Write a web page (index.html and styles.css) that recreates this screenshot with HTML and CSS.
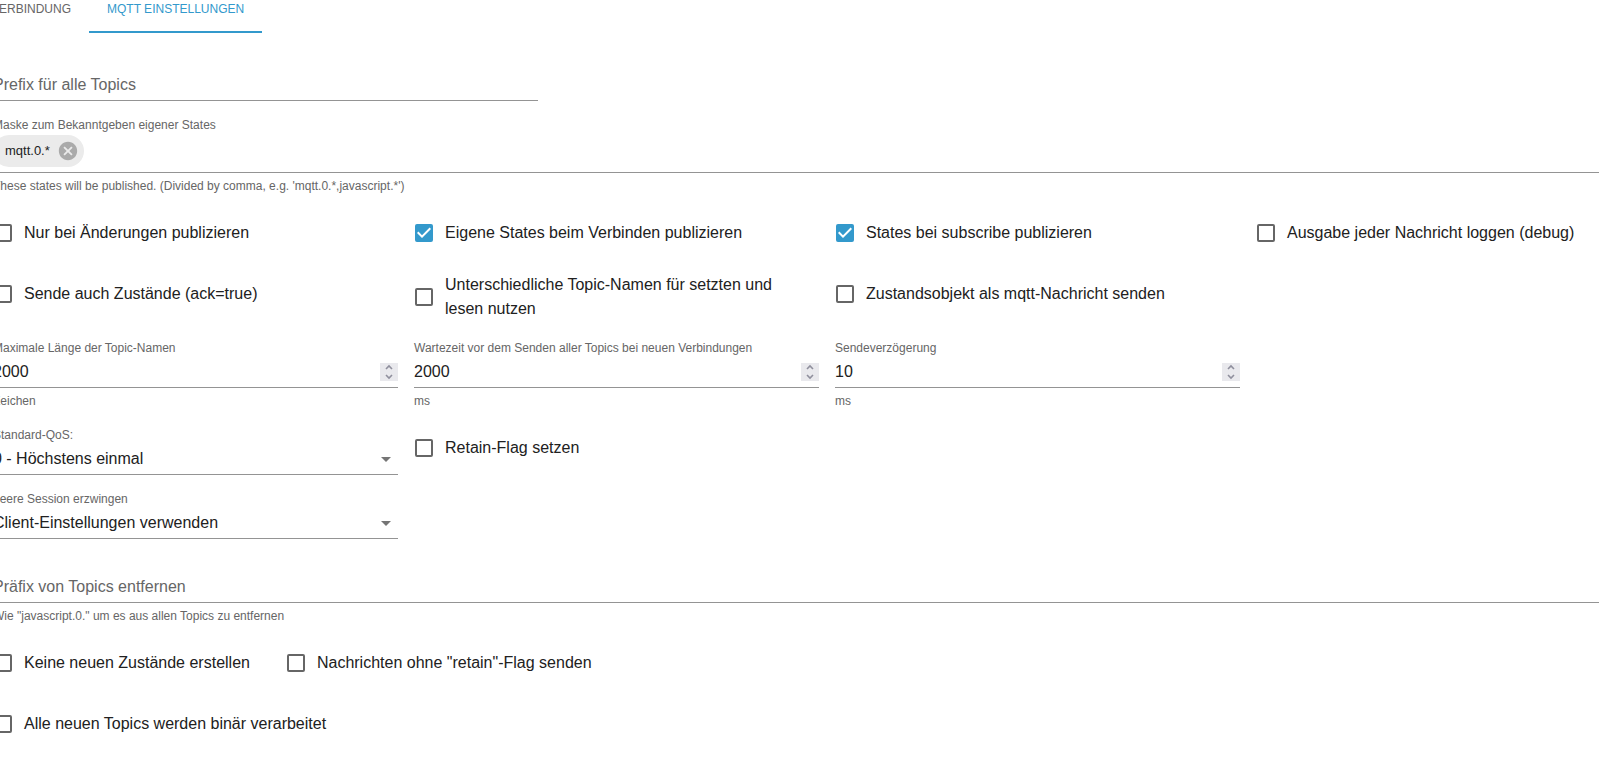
FILE: index.html
```html
<!DOCTYPE html>
<html lang="de">
<head>
<meta charset="utf-8">
<title>MQTT Einstellungen</title>
<link rel="stylesheet" href="styles.css">
</head>
<body>
<div class="panel">
  <nav class="tabs" role="tablist">
    <button class="tab" role="tab" type="button" aria-selected="false">Verbindung</button>
    <button class="tab tab-active" role="tab" type="button" aria-selected="true">MQTT Einstellungen</button>
  </nav>

  <form class="settings">
    <div class="row thirds">
      <div class="field field-empty">
        <label class="placeholder" for="prefix">Prefix für alle Topics</label>
        <input class="control" id="prefix" type="text">
      </div>
    </div>

    <div class="field">
      <label class="label" for="mask">Maske zum Bekanntgeben eigener States</label>
      <div class="chips">
        <span class="chip">mqtt.0.*
          <button class="chip-remove" type="button" aria-label="mqtt.0.* entfernen">
            <svg viewBox="0 0 24 24" width="22" height="22"><path d="M12 2C6.47 2 2 6.47 2 12s4.47 10 10 10 10-4.47 10-10S17.53 2 12 2zm5 13.59L15.59 17 12 13.41 8.41 17 7 15.59 10.59 12 7 8.41 8.41 7 12 10.59 15.59 7 17 8.41 13.41 12 17 15.59z"/></svg>
          </button>
        </span>
        <input class="chip-input" id="mask" type="text">
      </div>
      <p class="helper">These states will be published. (Divided by comma, e.g. 'mqtt.0.*,javascript.*')</p>
    </div>

    <div class="row quarters checks">
      <label class="check"><input type="checkbox"><span>Nur bei Änderungen publizieren</span></label>
      <label class="check"><input type="checkbox" checked><span>Eigene States beim Verbinden publizieren</span></label>
      <label class="check"><input type="checkbox" checked><span>States bei subscribe publizieren</span></label>
      <label class="check"><input type="checkbox"><span>Ausgabe jeder Nachricht loggen (debug)</span></label>
    </div>

    <div class="row quarters checks">
      <label class="check"><input type="checkbox"><span>Sende auch Zustände (ack=true)</span></label>
      <label class="check"><input type="checkbox"><span>Unterschiedliche Topic-Namen für setzten und lesen nutzen</span></label>
      <label class="check"><input type="checkbox"><span>Zustandsobjekt als mqtt-Nachricht senden</span></label>
    </div>

    <div class="row quarters">
      <div class="field">
        <label class="label" for="maxlen">Maximale Länge der Topic-Namen</label>
        <div class="control-box">
          <input class="control" id="maxlen" type="number" value="2000">
          <svg class="stepper" viewBox="0 0 18 18" width="18" height="18"><path d="M6 6l3-3 3 3M6 12l3 3 3-3"/></svg>
        </div>
        <p class="helper">Zeichen</p>
      </div>
      <div class="field">
        <label class="label" for="wait">Wartezeit vor dem Senden aller Topics bei neuen Verbindungen</label>
        <div class="control-box">
          <input class="control" id="wait" type="number" value="2000">
          <svg class="stepper" viewBox="0 0 18 18" width="18" height="18"><path d="M6 6l3-3 3 3M6 12l3 3 3-3"/></svg>
        </div>
        <p class="helper">ms</p>
      </div>
      <div class="field">
        <label class="label" for="delay">Sendeverzögerung</label>
        <div class="control-box">
          <input class="control" id="delay" type="number" value="10">
          <svg class="stepper" viewBox="0 0 18 18" width="18" height="18"><path d="M6 6l3-3 3 3M6 12l3 3 3-3"/></svg>
        </div>
        <p class="helper">ms</p>
      </div>
    </div>

    <div class="row quarters">
      <div class="field">
        <label class="label" for="qos">Standard-QoS:</label>
        <div class="control-box">
          <select class="control" id="qos"><option>0 - Höchstens einmal</option></select>
          <svg class="arrow" viewBox="0 0 24 24" width="24" height="24"><path d="M7 10l5 5 5-5z"/></svg>
        </div>
      </div>
      <label class="check"><input type="checkbox"><span>Retain-Flag setzen</span></label>
    </div>

    <div class="row quarters">
      <div class="field">
        <label class="label" for="session">Leere Session erzwingen</label>
        <div class="control-box">
          <select class="control" id="session"><option>Client-Einstellungen verwenden</option></select>
          <svg class="arrow" viewBox="0 0 24 24" width="24" height="24"><path d="M7 10l5 5 5-5z"/></svg>
        </div>
      </div>
    </div>

    <div class="field field-empty">
      <label class="placeholder" for="strip">Präfix von Topics entfernen</label>
      <input class="control" id="strip" type="text">
      <p class="helper">Wie "javascript.0." um es aus allen Topics zu entfernen</p>
    </div>

    <div class="row inline checks">
      <label class="check"><input type="checkbox"><span>Keine neuen Zustände erstellen</span></label>
      <label class="check"><input type="checkbox"><span>Nachrichten ohne "retain"-Flag senden</span></label>
    </div>

    <div class="row inline checks">
      <label class="check"><input type="checkbox"><span>Alle neuen Topics werden binär verarbeitet</span></label>
    </div>
  </form>
</div>
</body>
</html>
```
FILE: styles.css
```css
* {
  box-sizing: border-box;
}

body {
  margin: 0;
  overflow: hidden;
  background: #fff;
  color: #212121;
  font: 16px/24px "Liberation Sans", Arial, sans-serif;
}

button,
input,
select {
  margin: 0;
  padding: 0;
  border: 0;
  border-radius: 0;
  background: none;
  color: inherit;
  font: inherit;
}

/* The panel is scrolled slightly to the right and down inside the window. */
.panel {
  margin: -15px -62px 0 -7px;
}

.tabs {
  display: flex;
  margin-left: -20px;
}

.tab {
  height: 48px;
  padding: 0 18px;
  color: #666;
  font-size: 12px;
  text-transform: uppercase;
}

.tab-active {
  box-shadow: inset 0 -2px #39c;
  color: #39c;
}

.settings {
  display: flex;
  flex-direction: column;
  gap: 16px;
  padding: 20px 0;
}

.row {
  display: grid;
  gap: 16px;
  align-items: start;
}

.thirds {
  grid-template-columns: repeat(3, 1fr);
}

.quarters {
  grid-template-columns: repeat(4, 1fr);
}

.inline {
  display: flex;
  gap: 20px;
}

.checks {
  padding-bottom: 3px;
}

.field {
  display: flex;
  flex-direction: column;
}

.field-empty {
  position: relative;
  padding-top: 16px;
}

.placeholder {
  position: absolute;
  top: 20px;
  left: 0;
  color: #666;
}

.label {
  color: #666;
  font-size: 12px;
  line-height: 16px;
}

.control-box {
  display: grid;
  align-items: center;
}

.control-box > * {
  grid-area: 1 / 1;
}

.control {
  width: 100%;
  height: 32px;
  border-bottom: 1px solid #949494;
  outline: 0;
  appearance: none;
}

.control[type="number"] {
  appearance: textfield;
}

.control::-webkit-inner-spin-button {
  appearance: none;
}

.stepper,
.arrow {
  justify-self: end;
  pointer-events: none;
}

.stepper {
  background: #e9e9ed;
  fill: none;
  stroke: #8f8f9d;
  stroke-width: 1.6;
}

.arrow {
  fill: #757575;
}

.helper {
  margin: 3px 0 0;
  color: #666;
  font-size: 12px;
  line-height: 20px;
}

.chips {
  display: flex;
  align-items: center;
  padding: 2px 0 5px;
  border-bottom: 1px solid #949494;
}

.chip {
  display: flex;
  align-items: center;
  gap: 7px;
  height: 32px;
  padding: 0 5px 0 12px;
  border-radius: 16px;
  background: #ebebeb;
  font-size: 13px;
}

.chip-remove {
  display: flex;
  fill: #aaa;
}

.chip-input {
  flex: 1;
  height: 32px;
  outline: 0;
}

.check {
  display: flex;
  align-items: center;
  gap: 12px;
  min-height: 42px;
  padding: 0 16px 0 1px;
}

.check input {
  flex: none;
  width: 18px;
  height: 18px;
  border: 2px solid #666;
  border-radius: 2px;
  appearance: none;
}

.check input:checked {
  border-color: #39c;
  background: #39c url("data:image/svg+xml,%3Csvg xmlns='http://www.w3.org/2000/svg' viewBox='3 3 18 18'%3E%3Cpath fill='%23fff' d='M10 17l-5-5 1.41-1.41L10 14.17l7.59-7.59L19 8z'/%3E%3C/svg%3E") center / 18px 18px no-repeat;
}
```
